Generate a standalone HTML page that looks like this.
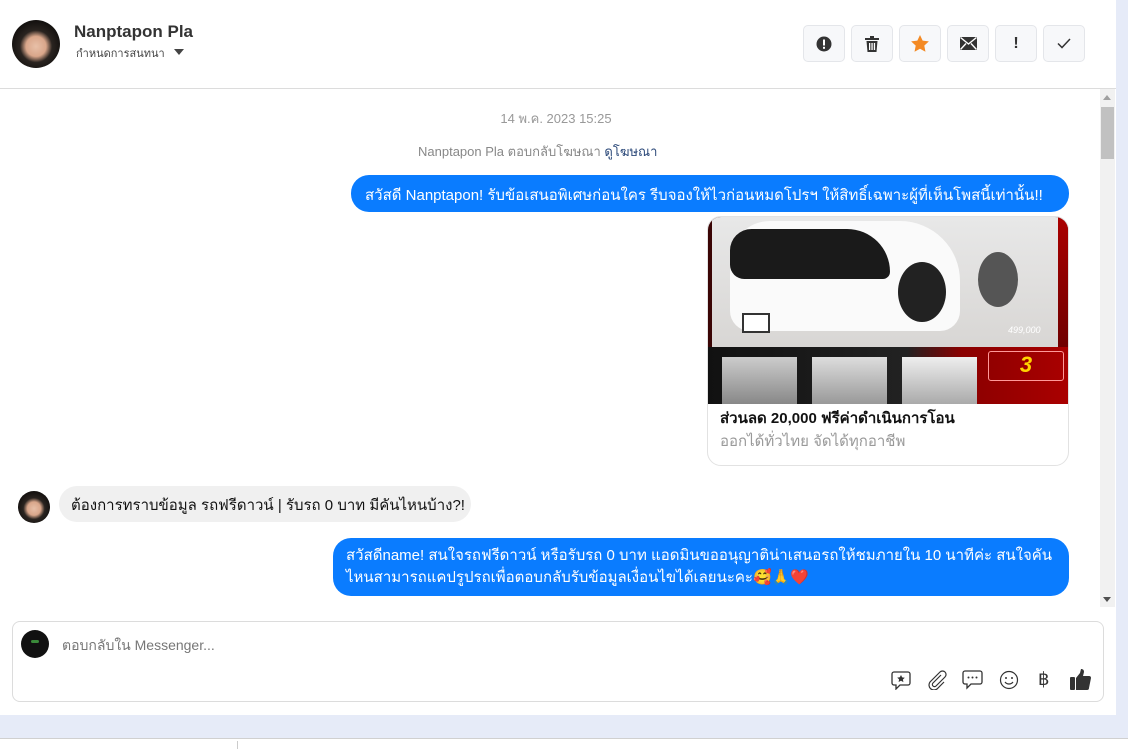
<!DOCTYPE html>
<html><head><meta charset="utf-8"><style>
*{box-sizing:border-box;margin:0;padding:0}
body{width:1128px;height:749px;background:#fff;font-family:"Liberation Sans","DejaVu Sans",sans-serif;position:relative;overflow:hidden}
.abs{position:absolute}
.main{left:0;top:0;width:1116px;height:715px;background:#fff}
.rstrip{left:1116px;top:0;width:12px;height:738px;background:#e6ebf8}
.bstrip{left:0;top:715px;width:1128px;height:23px;background:#e6ebf8}
.bline{left:0;top:738px;width:1128px;height:1px;background:#d0d0d0}
.btn{position:absolute;top:25px;width:42px;height:37px;border:1px solid #e4e6ea;border-radius:5px;background:#f7f8fa;display:flex;align-items:center;justify-content:center}
.blue{position:absolute;background:#0a7cff;color:#fff;font-size:15px;border-radius:18px;white-space:nowrap}
</style></head><body>
<div class="abs main"></div>
<div class="abs rstrip"></div>
<div class="abs bstrip"></div>
<div class="abs bline"></div>
<div class="abs" style="left:237px;top:741px;width:1px;height:8px;background:#ccc"></div>

<div class="abs" style="left:12px;top:20px;width:48px;height:48px;border-radius:50%;background:radial-gradient(circle at 50% 55%,#e8c0a8 0,#d9a68a 28%,#2a2420 45%,#151210 70%)"></div>
<div class="abs" style="left:74px;top:22px;font-size:17px;font-weight:bold;color:#333">Nanptapon Pla</div>
<div class="abs" style="left:76px;top:44px;font-size:11px;color:#444">กำหนดการสนทนา</div>
<div class="abs" style="left:174px;top:49px;width:0;height:0;border-left:5px solid transparent;border-right:5px solid transparent;border-top:6px solid #444"></div>
<div class="abs" style="left:0;top:88px;width:1116px;height:1px;background:#dcdcdc"></div>

<div class="btn" style="left:803px"><svg width="16" height="16" viewBox="0 0 16 16"><circle cx="8" cy="8" r="7.5" fill="#333"/><rect x="7" y="3.5" width="2" height="6" fill="#fff"/><rect x="7" y="10.8" width="2" height="2" fill="#fff"/></svg></div>
<div class="btn" style="left:851px"><svg width="14" height="16" viewBox="0 0 14 16"><rect x="0" y="2" width="14" height="2" fill="#333"/><rect x="5" y="0" width="4" height="2" fill="#333"/><path d="M1.5 5h11l-1 11h-9z" fill="#333"/><rect x="4" y="7" width="1.3" height="7" fill="#fff"/><rect x="6.4" y="7" width="1.3" height="7" fill="#fff"/><rect x="8.8" y="7" width="1.3" height="7" fill="#fff"/></svg></div>
<div class="btn" style="left:899px"><svg width="18" height="17" viewBox="0 0 24 23"><path d="M12 0l3.6 7.6 8.4 1-6.2 5.8 1.6 8.3L12 18.6 4.6 22.7l1.6-8.3L0 8.6l8.4-1z" fill="#f48a24"/></svg></div>
<div class="btn" style="left:947px"><svg width="17" height="13" viewBox="0 0 17 13"><rect width="17" height="13" fill="#333"/><path d="M0.5 0.5L8.5 7L16.5 0.5M0.5 12.5L6 6.5M16.5 12.5L11 6.5" stroke="#fff" stroke-width="1.4" fill="none"/></svg></div>
<div class="btn" style="left:995px"><span style="font-size:16px;font-weight:bold;color:#333">!</span></div>
<div class="btn" style="left:1043px"><svg width="14" height="11" viewBox="0 0 14 11"><path d="M1 5.5l4 4L13 1" stroke="#333" stroke-width="1.5" fill="none"/></svg></div>

<div class="abs" style="left:1100px;top:89px;width:15px;height:518px;background:#f1f1f1"></div>
<div class="abs" style="left:1101px;top:107px;width:13px;height:52px;background:#c1c1c1"></div>
<div class="abs" style="left:1103px;top:95px;width:0;height:0;border-left:4px solid transparent;border-right:4px solid transparent;border-bottom:5px solid #a0a0a0"></div>
<div class="abs" style="left:1103px;top:597px;width:0;height:0;border-left:4px solid transparent;border-right:4px solid transparent;border-top:5px solid #505050"></div>

<div class="abs" style="left:0;width:1100px;top:108px;text-align:center;font-size:13px;color:#999;padding-left:12px">14 พ.ค. 2023 15:25</div>
<div class="abs" style="left:418px;top:141px;font-size:13px;color:#888;white-space:nowrap">Nanptapon Pla ตอบกลับโฆษณา <span style="color:#2d4a7a">ดูโฆษณา</span></div>

<div class="blue" style="left:351px;top:175px;width:718px;height:37px;padding:8px 0 0 14px">สวัสดี Nanptapon! รับข้อเสนอพิเศษก่อนใคร รีบจองให้ไวก่อนหมดโปรฯ ให้สิทธิ์เฉพาะผู้ที่เห็นโพสนี้เท่านั้น!!</div>

<div class="abs" style="left:707px;top:216px;width:362px;height:250px;border:1px solid #e2e2e2;border-radius:14px;overflow:hidden;background:#fff">
 <div class="abs" style="left:0;top:0;width:362px;height:187px;background:#3a0505"></div>
 <div class="abs" style="left:4px;top:0;width:354px;height:130px;background:linear-gradient(180deg,#e8e8e8,#d8d6d4)"></div>
 <div class="abs" style="left:350px;top:0;width:12px;height:187px;background:linear-gradient(180deg,#a00,#500)"></div>
 <div class="abs" style="left:22px;top:4px;width:230px;height:110px;background:#fafafa;border-radius:40px 60px 20px 20px"></div>
 <div class="abs" style="left:22px;top:12px;width:160px;height:50px;background:#1a1a1a;border-radius:30px 60px 10px 20px"></div>
 <div class="abs" style="left:190px;top:45px;width:48px;height:60px;background:#222;border-radius:50%"></div>
 <div class="abs" style="left:270px;top:35px;width:40px;height:55px;background:#555;border-radius:50%"></div>
 <div class="abs" style="left:34px;top:96px;width:28px;height:20px;background:#fff;border:2px solid #333"></div>
 <div class="abs" style="left:0;top:130px;width:362px;height:57px;background:linear-gradient(90deg,#111 0,#222 55%,#8a0000 70%,#a00 100%)"></div>
 <div class="abs" style="left:14px;top:140px;width:75px;height:47px;background:linear-gradient(180deg,#ccc,#888)"></div>
 <div class="abs" style="left:104px;top:140px;width:75px;height:47px;background:linear-gradient(180deg,#ddd,#999)"></div>
 <div class="abs" style="left:194px;top:140px;width:75px;height:47px;background:linear-gradient(180deg,#eee,#aaa)"></div>
 <div class="abs" style="left:280px;top:134px;width:76px;height:30px;border:1px solid #f99;border-radius:3px;color:#ffd400;font-size:22px;font-weight:bold;font-style:italic;text-align:center">3</div>
 <div class="abs" style="left:300px;top:108px;font-size:9px;color:#fff;font-style:italic">499,000</div>
 <div class="abs" style="left:12px;top:189px;font-size:15px;font-weight:bold;color:#111;white-space:nowrap">ส่วนลด 20,000 ฟรีค่าดำเนินการโอน</div>
 <div class="abs" style="left:12px;top:212px;font-size:15px;color:#999;white-space:nowrap">ออกได้ทั่วไทย จัดได้ทุกอาชีพ</div>
</div>

<div class="abs" style="left:18px;top:491px;width:32px;height:32px;border-radius:50%;background:radial-gradient(circle at 50% 55%,#e8c0a8 0,#d9a68a 28%,#2a2420 45%,#151210 70%)"></div>
<div class="abs" style="left:59px;top:486px;width:412px;height:36px;border-radius:18px;background:#f0f0f0;font-size:15px;color:#111;padding:7px 0 0 12px;white-space:nowrap">ต้องการทราบข้อมูล รถฟรีดาวน์ | รับรถ 0 บาท มีคันไหนบ้าง?!</div>

<div class="blue" style="left:333px;top:538px;width:736px;height:58px;padding:7px 0 0 13px;line-height:22px">สวัสดีname! สนใจรถฟรีดาวน์ หรือรับรถ 0 บาท แอดมินขออนุญาติน่าเสนอรถให้ชมภายใน 10 นาทีค่ะ สนใจคัน<br>ไหนสามารถแคปรูปรถเพื่อตอบกลับรับข้อมูลเงื่อนไขได้เลยนะคะ🥰🙏❤️</div>

<div class="abs" style="left:12px;top:621px;width:1092px;height:81px;border:1px solid #dcdcdc;border-radius:8px"></div>
<div class="abs" style="left:21px;top:630px;width:28px;height:28px;border-radius:50%;background:#111"><div style="position:absolute;left:10px;top:10px;width:8px;height:3px;background:#3a8a3a;border-radius:2px"></div></div>
<div class="abs" style="left:62px;top:635px;font-size:14px;color:#777">ตอบกลับใน Messenger...</div>

<svg class="abs" style="left:891px;top:670px" width="20" height="20" viewBox="0 0 20 20"><path d="M3 2h14a2 2 0 0 1 2 2v9a2 2 0 0 1-2 2H9l-4 4v-4H3a2 2 0 0 1-2-2V4a2 2 0 0 1 2-2z" fill="none" stroke="#333" stroke-width="1.3"/><path d="M10 5l1.2 2.4 2.6.3-1.9 1.8.5 2.6L10 10.8 7.6 12l.5-2.6-1.9-1.8 2.6-.3z" fill="#333"/></svg>
<svg class="abs" style="left:927px;top:670px" width="20" height="20" viewBox="0 0 20 20"><path d="M14 5l-8 8a2 2 0 0 0 3 3l9-9a3.5 3.5 0 0 0-5-5L3 12a5 5 0 0 0 7 7l7-7" fill="none" stroke="#333" stroke-width="1.2"/></svg>
<svg class="abs" style="left:962px;top:670px" width="21" height="20" viewBox="0 0 21 20"><path d="M3 1h15a2 2 0 0 1 2 2v9a2 2 0 0 1-2 2H9l-4 4v-4H3a2 2 0 0 1-2-2V3a2 2 0 0 1 2-2z" fill="none" stroke="#333" stroke-width="1.3"/><circle cx="6.5" cy="7.5" r="1" fill="#333"/><circle cx="10.5" cy="7.5" r="1" fill="#333"/><circle cx="14.5" cy="7.5" r="1" fill="#333"/></svg>
<svg class="abs" style="left:999px;top:670px" width="20" height="20" viewBox="0 0 20 20"><circle cx="10" cy="10" r="8.5" fill="none" stroke="#333" stroke-width="1.2"/><circle cx="7" cy="8" r="1" fill="#333"/><circle cx="13" cy="8" r="1" fill="#333"/><path d="M6 12a5 5 0 0 0 8 0" fill="none" stroke="#333" stroke-width="1.2"/></svg>
<div class="abs" style="left:1038px;top:669px;font-size:18px;color:#333">฿</div>
<svg class="abs" style="left:1070px;top:669px" width="22" height="21" viewBox="0 0 22 21"><rect x="0" y="8" width="5" height="13" rx="1" fill="#333"/><path d="M6 9l4-5 1-4c2 0 3 1 3 3l-1 4h6a2 2 0 0 1 2 2l-2 10a2 2 0 0 1-2 2H6z" fill="#333"/></svg>
</body></html>
